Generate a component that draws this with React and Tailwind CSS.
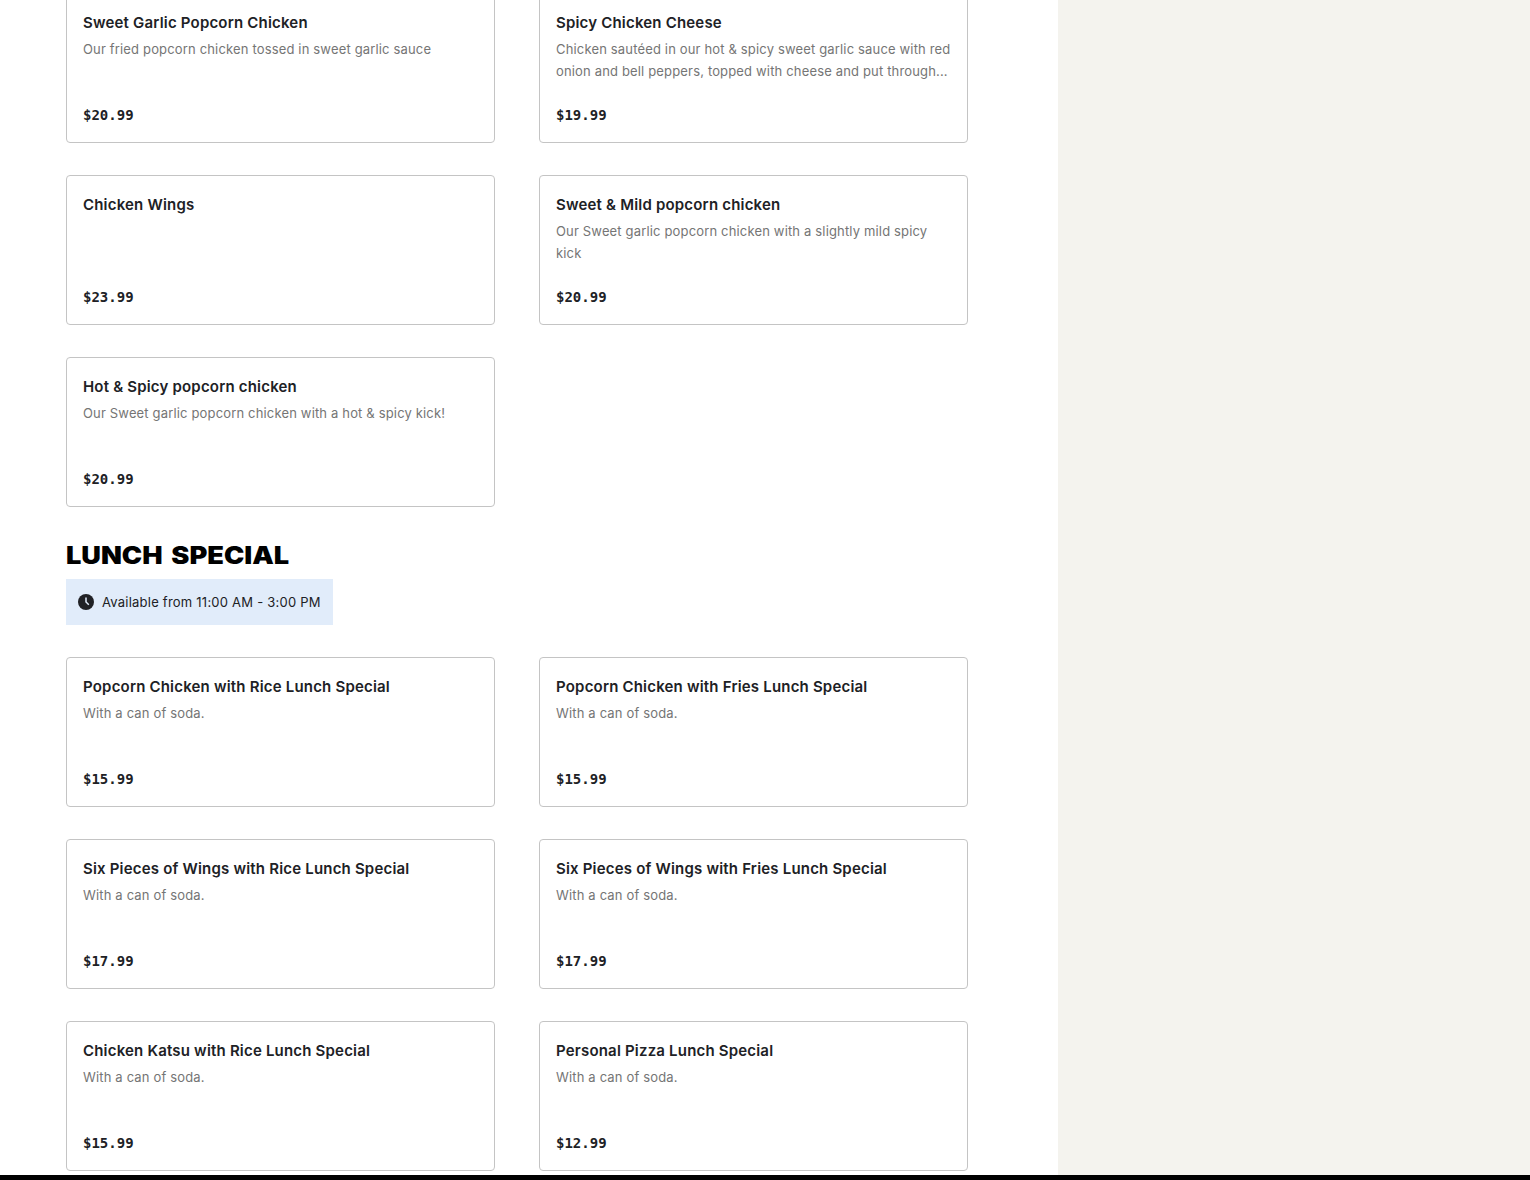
import React from 'react'

const chickenItems = [
    { name: 'Sweet Garlic Popcorn Chicken', description: 'Our fried popcorn chicken tossed in sweet garlic sauce', price: '$20.99' },
    { name: 'Spicy Chicken Cheese', description: 'Chicken sautéed in our hot & spicy sweet garlic sauce with red onion and bell peppers, topped with cheese and put through...', price: '$19.99' },
    { name: 'Chicken Wings', description: '', price: '$23.99' },
    { name: 'Sweet & Mild popcorn chicken', description: 'Our Sweet garlic popcorn chicken with a slightly mild spicy kick', price: '$20.99' },
    { name: 'Hot & Spicy popcorn chicken', description: 'Our Sweet garlic popcorn chicken with a hot & spicy kick!', price: '$20.99' },
]

const lunchItems = [
    { name: 'Popcorn Chicken with Rice Lunch Special', description: 'With a can of soda.', price: '$15.99' },
    { name: 'Popcorn Chicken with Fries Lunch Special', description: 'With a can of soda.', price: '$15.99' },
    { name: 'Six Pieces of Wings with Rice Lunch Special', description: 'With a can of soda.', price: '$17.99' },
    { name: 'Six Pieces of Wings with Fries Lunch Special', description: 'With a can of soda.', price: '$17.99' },
    { name: 'Chicken Katsu with Rice Lunch Special', description: 'With a can of soda.', price: '$15.99' },
    { name: 'Personal Pizza Lunch Special', description: 'With a can of soda.', price: '$12.99' },
]

const MenuCard = ({ item }) => (
    <article className="flex h-[150px] flex-col rounded-[4px] border border-[#c4c4c4] px-4 pt-[18px] pb-4">
        <h3 className="text-[15px] leading-[22px] font-semibold tracking-[0.19px] whitespace-nowrap text-[#202125]">{item.name}</h3>
        <p className="mt-1 h-[44px] text-[13px] leading-[22px] tracking-[0.16px] text-[#757575]">{item.description}</p>
        <p className="mt-auto font-['DejaVu_Sans_Mono',monospace] text-[14px] leading-[22px] font-bold text-[#202125]">{item.price}</p>
    </article>
)

const MenuGrid = ({ items }) => (
    <div className="grid grid-cols-[429px_429px] gap-x-11 gap-y-8">
        {items.map(item => <MenuCard key={item.name} item={item} />)}
    </div>
)

const ClockIcon = () => (
    <svg width="16" height="16" viewBox="0 0 16 16" fill="none">
        <circle cx="8" cy="8" r="8" fill="#202125" />
        <path d="M8 3.5V8L10.8 10.8" stroke="#e1ecfa" strokeWidth="1.5" />
    </svg>
)

const App = () => {
    return (
        <div className="flex h-[1180px] w-[1530px] flex-col overflow-hidden bg-white font-['Inter',sans-serif]">
            <div className="flex h-[1175px] overflow-hidden">
                <main className="w-[1058px] shrink-0 pl-[66px]">
                    <section className="-mt-[7px]">
                        <MenuGrid items={chickenItems} />
                    </section>
                    <section className="mt-[33px]">
                        <h2 className="text-[24px] leading-[32px] font-black whitespace-nowrap text-black">
                            <span className="inline-block origin-left scale-x-[1.132] [word-spacing:3px]">LUNCH SPECIAL</span>
                        </h2>
                        <div className="mt-[7px] mb-8 flex h-[46px] w-[267px] items-center gap-2 bg-[#e1ecfa] pl-3 text-[13px] tracking-[0.23px] whitespace-nowrap text-[#202125]">
                            <ClockIcon />
                            <span className="pt-0.5">Available from 11:00 AM - 3:00 PM</span>
                        </div>
                        <MenuGrid items={lunchItems} />
                    </section>
                </main>
                <aside className="flex-1 bg-[#f4f3ee]" />
            </div>
            <footer className="h-[5px] shrink-0 bg-black" />
        </div>
    )
}

export default App
